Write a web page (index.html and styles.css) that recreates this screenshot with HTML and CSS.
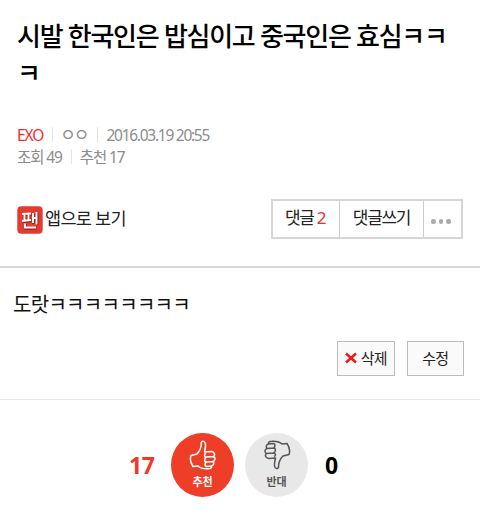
FILE: index.html
```
<!DOCTYPE html>
<html lang="ko">
<head>
<meta charset="utf-8">
<title>게시글</title>
<link rel="stylesheet" href="styles.css">
</head>
<body>
<header class="head">
  <h1 class="title">시발 한국인은 밥심이고 중국인은 효심ㅋㅋㅋ</h1>
  <div class="meta">
    <div class="meta-row"><span class="board">EXO</span><i class="bar"></i><span class="author">ㅇㅇ</span><i class="bar"></i><span class="date">2016.03.19 20:55</span></div>
    <div class="meta-row"><span class="views">조회 49</span><i class="bar"></i><span class="likes">추천 17</span></div>
  </div>
  <div class="tools">
    <a class="app">
      <svg class="logo" viewBox="0 0 26 28"><rect x=".3" y=".3" width="25.4" height="27.4" rx="4" fill="#e33b34"/><g fill="none" stroke="#9f1e1b" stroke-width="3" transform="translate(.5 .7)"><path d="M5 8 14 7.500M7.500 7.500v7M11.500 7.500v7M5 15l9-1M16 7v10M19.500 6v12.500M16 12h3.500M8 17.500v4h11"/></g><g fill="none" stroke="#fff" stroke-width="1.900"><path d="M5 8 14 7.500M7.500 7.500v7M11.500 7.500v7M5 15l9-1M16 7v10M19.500 6v12.500M16 12h3.500M8 17.500v4h11"/></g></svg>
      <span class="app-text">앱으로 보기</span>
    </a>
    <div class="group">
      <a class="cell cell-count"><span>댓글 <b>2</b></span></a>
      <a class="cell cell-write"><span>댓글쓰기</span></a>
      <a class="cell cell-more"><i></i><i></i><i></i></a>
    </div>
  </div>
</header>
<main class="content">
  <p class="text">도랏ㅋㅋㅋㅋㅋㅋㅋㅋ</p>
  <div class="actions">
    <a class="btn"><svg class="x" viewBox="0 0 12 12"><path d="M1 1.500 11 10.500M11 1.500 1 10.500" stroke="#f01818" stroke-width="2.500"/></svg><span>삭제</span></a>
    <a class="btn"><span>수정</span></a>
  </div>
</main>
<section class="vote">
  <strong class="num up">17</strong>
  <a class="circle good">
    <svg class="thumb" viewBox="0 0 28 30"><path d="M2 15.500 8 14C11 11 12.500 7 12.300 2.500 13 .5 16 1 16.500 4 16.800 7 16 9.500 15.500 12L22 11.500C25.500 11.500 26.500 15 24.500 16.500 27 18 26 21 24 21.500 25.500 23.500 24.500 25.500 22.500 26 23 28 21.500 28.800 19 28.800 14.500 29 11.500 28.500 9 26L4 26.500C1.500 23 .8 19 2 15.500ZM24.500 16.500 17.500 17C15 17 15 14 17 13.500M24 21.500 17.500 22C15 22 15 18 17.500 17M22.500 26 18 26.500C15.500 26.500 15.500 23 17.500 22"/></svg>
    <span>추천</span>
  </a>
  <a class="circle bad">
    <svg class="thumb" viewBox="0 0 28 30"><path d="M26 14.500 20 16C17 19 15.500 22 15.500 27 15 29.500 12 29 11.500 26 11.200 23 12 20.500 12.500 18L6 18.500C2.500 18.500 1.500 15 3.500 13.500 1 12 2 9 4 8.500 2.500 6.500 3.500 4.500 5.500 4 5 2 6.500 1.200 9 1.200 13.500 1 16.500 1.500 19 4L24 3.500C26.500 7 27.200 11 26 14.500ZM3.500 13.500 10.500 13C13 13 13 16 11 16.500M4 8.500 10.500 8C13 8 13 12 10.500 13M5.500 4 10 3.500C12.500 3.500 12.500 7 10.500 8"/></svg>
    <span>반대</span>
  </a>
  <strong class="num down">0</strong>
</section>
</body>
</html>
```
FILE: styles.css
```
* { box-sizing: border-box; }
body {
  margin: 0;
  background: #fff;
  color: #222;
  font-family: "Noto Sans", "Noto Sans CJK KR", sans-serif;
}
.head {
  height: 268px;
  padding: 18px 17px 0 17px;
  border-bottom: 2px solid #d9d9d9;
}
.title {
  margin: 0;
  height: 106px;
  font-size: 26px;
  font-weight: 500;
  line-height: 37px;
  letter-spacing: -1.270px;
  color: #000;
  word-break: break-all;
}
.meta-row {
  display: flex;
  align-items: center;
  height: 21.500px;
  font-size: 15.500px;
  letter-spacing: -1.100px;
  color: #8c8c8c;
  white-space: nowrap;
}
.board { color: #f22c2c; }
.date { letter-spacing: -1.270px; }
.author { font-size: 17px; line-height: 20px; letter-spacing: -2px; }
.bar { width: 1px; height: 15px; margin: 0 8px 0 9px; background: #e4e4e4; }
.author + .bar { margin-left: 10px; }
.bar:has(+ .author) { margin-right: 7px; }
.tools {
  display: flex;
  justify-content: space-between;
  margin-top: 32px;
}
.app { display: flex; align-items: flex-start; }
.logo { width: 26px; height: 28px; margin: 7px 2px 0 0; }
.app-text { font-size: 17.500px; line-height: 38px; letter-spacing: -.7px; }
.group {
  display: flex;
  width: 192px;
  height: 40px;
  border: 2px solid #d6d6d6;
}
.cell {
  display: flex;
  justify-content: center;
  font-size: 17px;
  line-height: 34px;
  letter-spacing: -1.300px;
  white-space: nowrap;
}
.cell + .cell { border-left: 1px solid #ccc; }
.cell-count { width: 66px; padding-right: 2px; }
.cell-write { width: 84px; }
.cell-more { flex: 1; gap: 3px; padding: 18px 3px 0 0; }
.cell-more i { width: 4.500px; height: 4.500px; border-radius: 50%; background: #aaa; }
.cell b { font-weight: 400; color: #f22c2c; }
.content {
  height: 132px;
  padding: 18px 16px 0 13px;
  border-bottom: 1px solid #e6e6e6;
}
.text {
  margin: 0;
  height: 55px;
  font-size: 20px;
  line-height: 37px;
  letter-spacing: -.7px;
  color: #111;
}
.actions { display: flex; justify-content: flex-end; gap: 12px; }
.btn {
  display: flex;
  align-items: center;
  justify-content: center;
  gap: 4px;
  width: 57.500px;
  height: 35px;
  padding-bottom: 2px;
  border: 1px solid #b9bbbd;
  background: #fafafa;
  font-size: 15px;
  letter-spacing: -.7px;
}
.x { width: 12px; height: 12px; }
.vote {
  display: flex;
  align-items: center;
  padding: 33px 0 0 129px;
}
.num { font-size: 23px; line-height: 30px; letter-spacing: -.3px; }
.up { width: 42px; color: #ee3a2b; }
.down { margin-left: 17px; color: #000; }
.circle {
  display: flex;
  flex-direction: column;
  align-items: center;
  width: 63px;
  height: 64px;
  padding-top: 7px;
  border-radius: 50%;
  font-size: 11px;
  font-weight: 700;
  line-height: 20px;
}
.good { margin-right: 11px; background: #ee3e28; color: #fff; }
.bad { background: #e8e8e8; color: #555; }
.thumb { width: 28px; height: 30px; margin-bottom: 2px; fill: none; stroke: currentColor; stroke-width: 1.500; stroke-linejoin: round; }
```
